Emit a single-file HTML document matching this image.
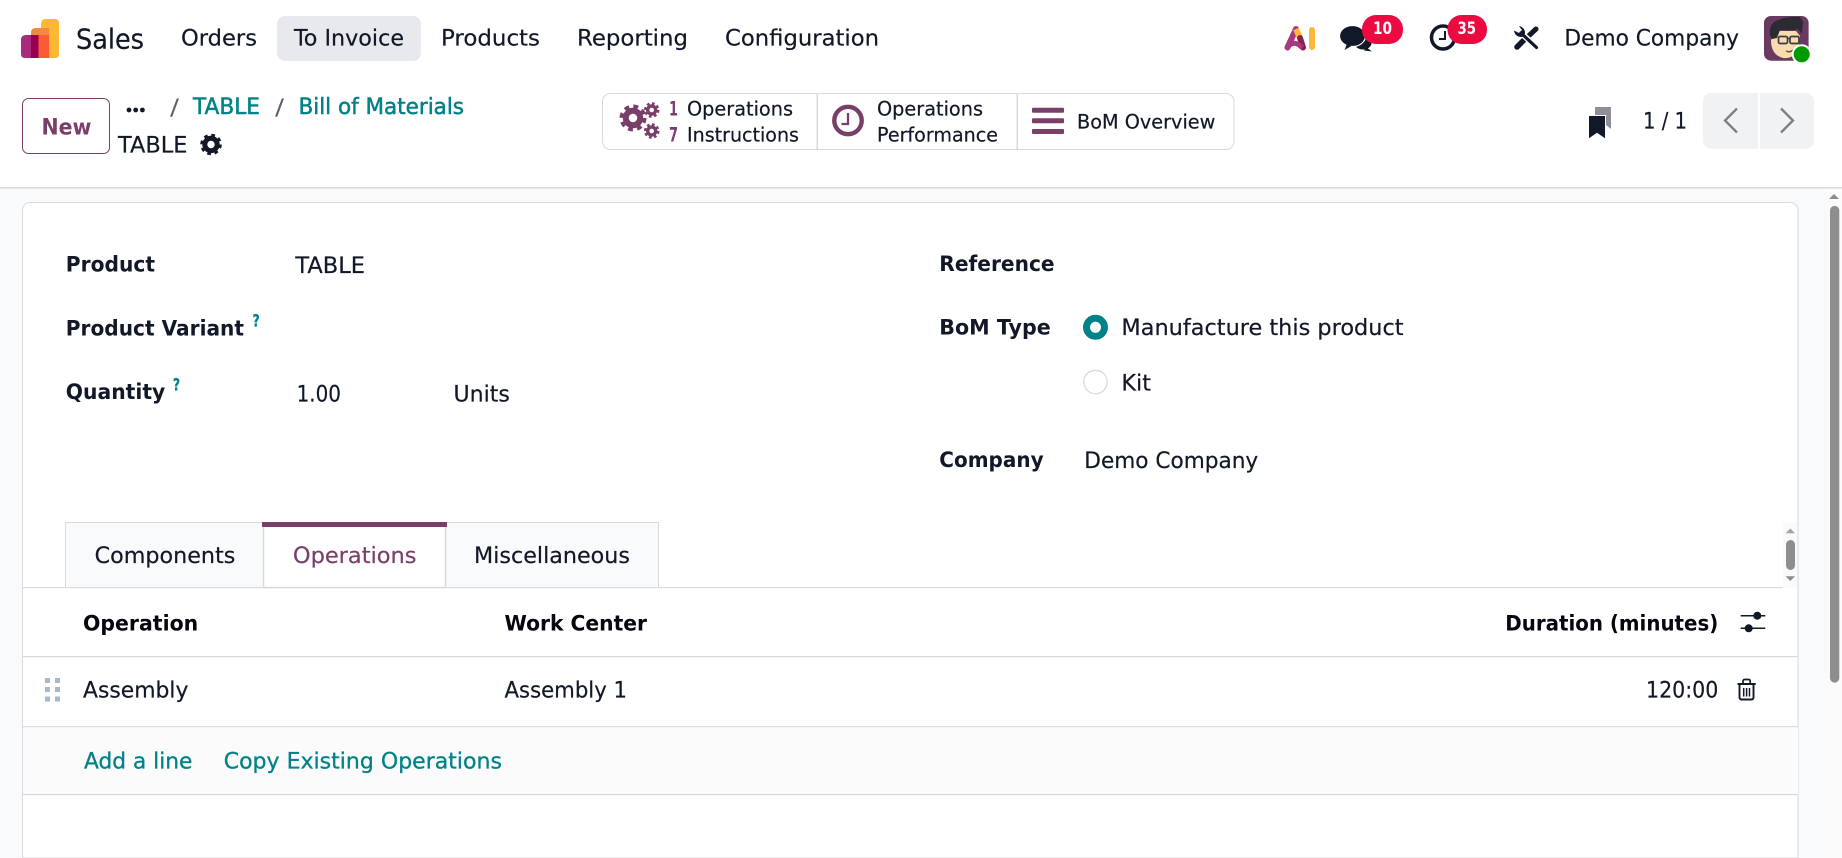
<!DOCTYPE html>
<html lang="en">
<head>
<meta charset="utf-8">
<title>TABLE - Bill of Materials</title>
<style>
html,body{margin:0;padding:0;width:1842px;height:858px;overflow:hidden;background:#f9fafb}
svg{display:block}
text{font-family:"DejaVu Sans","Liberation Sans",sans-serif;fill:#111827;stroke:#111827;stroke-width:.2px;font-size:22.5px;transform:translateY(-.4px)}
.b{font-weight:700;font-size:21.5px;stroke-width:0}
.s{font-size:19.6px}
.t{fill:#018287;stroke:#018287;stroke-width:.3px}
.p{fill:#793f69;stroke:#793f69}
.w{fill:#fff;stroke:none;font-weight:700;font-size:17px}
</style>
</head>
<body>
<svg width="1842" height="858" viewBox="0 0 1842 858" xmlns="http://www.w3.org/2000/svg">
<!-- page -->
<rect width="1842" height="858" fill="#f9fafb"/>
<rect x="1827" y="188" width="15" height="670" fill="#fbfbfb"/>
<rect width="1842" height="187" fill="#fff"/>
<rect y="187" width="1842" height="1.5" fill="#d8dadd"/>

<!-- app logo -->
<path d="M41 24q0-5 5-5h9q4 0 4 4v31q0 4-4 4H41z" fill="#fdb833"/>
<path d="M31 33q0-5 5-5h13v30H31z" fill="#fb5a37"/>
<path d="M31 33q0-5 5-5h13v7H31z" fill="#f08a3c"/>
<path d="M21 40q0-5 5-5h12v23H25q-4 0-4-4z" fill="#a72c7e"/>
<rect x="31" y="35" width="7.5" height="23" fill="#98004f"/>

<text x="76" y="49" style="font-size:28px" textLength="68" lengthAdjust="spacingAndGlyphs">Sales</text>

<!-- menu -->
<rect x="277" y="16" width="144" height="45" rx="8" fill="#e7e9ed"/>
<text x="181" y="46" textLength="76" lengthAdjust="spacingAndGlyphs">Orders</text>
<text x="294" y="46" textLength="110" lengthAdjust="spacingAndGlyphs">To Invoice</text>
<text x="441" y="46" textLength="99" lengthAdjust="spacingAndGlyphs">Products</text>
<text x="577" y="46" textLength="111" lengthAdjust="spacingAndGlyphs">Reporting</text>
<text x="725" y="46" textLength="154" lengthAdjust="spacingAndGlyphs">Configuration</text>

<!-- AI -->
<path d="M1287.500 47.500 L1296 29" stroke="#a8397f" stroke-width="6" stroke-linecap="round" fill="none"/>
<path d="M1296 29 L1300 38" stroke="#fbb93b" stroke-width="6" fill="none"/>
<path d="M1300 38 L1303 47.500" stroke="#8e1f4f" stroke-width="6" stroke-linecap="round" fill="none"/>
<path d="M1287 47.500 Q1294 39 1302 47.500" stroke="#a8397f" stroke-width="5" fill="none"/>
<rect x="1309" y="27" width="6" height="23" rx="3" fill="#fbb93b"/>

<!-- chat -->
<ellipse cx="1363" cy="43" rx="8.5" ry="6.5" fill="#111827"/>
<path d="M1366 47l6 4.500-8-1z" fill="#111827"/>
<ellipse cx="1352.500" cy="36" rx="13" ry="10.500" fill="#111827" stroke="#fff" stroke-width="1.2"/>
<path d="M1347 44l-2.500 6 7-4z" fill="#111827"/>
<rect x="1362" y="15" width="41" height="29" rx="14" fill="#ec0a40"/>
<text class="w" x="1373" y="34.500" textLength="19" lengthAdjust="spacingAndGlyphs">10</text>

<!-- activity -->
<circle cx="1443" cy="37.500" r="11.500" fill="none" stroke="#111827" stroke-width="3.500"/>
<path d="M1445 31v8h-6" fill="none" stroke="#111827" stroke-width="2"/>
<rect x="1447.500" y="15" width="39.500" height="29" rx="14" fill="#ec0a40"/>
<text class="w" x="1457.500" y="34.500" textLength="18.500" lengthAdjust="spacingAndGlyphs">35</text>

<!-- tools -->
<path d="M1536 29 L1528 36.500" stroke="#111827" stroke-width="5" stroke-linecap="round"/>
<path d="M1524 40 L1517 47" stroke="#111827" stroke-width="5.500" stroke-linecap="round"/>
<path d="M1521 33 L1537 47.500" stroke="#fff" stroke-width="6"/>
<path d="M1521 33 L1536.500 47.500" stroke="#111827" stroke-width="3.200" stroke-linecap="round"/>
<path d="M1514 30.500a7 7 0 0 0 9.500 6l1.500-3a7 7 0 0 0-6-7.500l3 4-3 3z" fill="#111827"/>

<text x="1564.400" y="46" textLength="174.600" lengthAdjust="spacingAndGlyphs">Demo Company</text>

<!-- avatar -->
<rect x="1764" y="16" width="44.600" height="44.700" rx="7" fill="#6a3a60"/>
<path d="M1771 40q0 15 12 18 10 1 15-8l2-14-4-5h-18z" fill="#f7dcb0"/>
<path d="M1770 35q-1-11 6-14 10-5 24-4l3 5-1 12-4-5q-7 2-13 1l-5 0-3 8-5 1z" fill="#2c2a33"/>
<rect x="1778.500" y="36.500" width="9" height="7" rx="1.500" fill="none" stroke="#3a3d45" stroke-width="1.700"/>
<rect x="1790" y="36.500" width="9" height="7" rx="1.500" fill="none" stroke="#3a3d45" stroke-width="1.700"/>
<path d="M1787 38.500h3" stroke="#3a3d45" stroke-width="1.500"/>
<path d="M1786 51q4 2 7-1" stroke="#8a4a3a" stroke-width="1.500" fill="none"/>
<circle cx="1801.700" cy="54.300" r="10" fill="#fff"/>
<circle cx="1801.700" cy="54.300" r="8" fill="#009a00"/>

<!-- control panel left -->
<rect x="22.500" y="98.500" width="87" height="55" rx="6" fill="#fff" stroke="#793f69"/>
<text class="p" x="41.500" y="135" style="font-size:22px;font-weight:700;stroke-width:0" textLength="50" lengthAdjust="spacingAndGlyphs">New</text>
<circle cx="129" cy="110" r="2.400" fill="#111827"/><circle cx="135.700" cy="110" r="2.400" fill="#111827"/><circle cx="142.400" cy="110" r="2.400" fill="#111827"/>
<text x="170" y="115.500" style="fill:#5c5f6e;stroke:none" textLength="9" lengthAdjust="spacingAndGlyphs">/</text>
<text class="t" x="193" y="114.300" style="stroke-width:.5px" textLength="67" lengthAdjust="spacingAndGlyphs">TABLE</text>
<text x="275" y="115.500" style="fill:#5c5f6e;stroke:none" textLength="9" lengthAdjust="spacingAndGlyphs">/</text>
<text class="t" x="298.500" y="114.300" style="stroke-width:.5px" textLength="165.500" lengthAdjust="spacingAndGlyphs">Bill of Materials</text>
<text x="118" y="152.700" textLength="69.400" lengthAdjust="spacingAndGlyphs">TABLE</text>
<circle cx="211" cy="144.500" r="6.200" fill="none" stroke="#111827" stroke-width="5"/>
<circle cx="211" cy="144.500" r="9.200" fill="none" stroke="#111827" stroke-width="3.200" stroke-dasharray="3.600 3.630"/>

<!-- smart buttons -->
<rect x="602.500" y="93.500" width="631.500" height="56" rx="8" fill="#fff" stroke="#d8dadd"/>
<rect x="816.500" y="94" width="1.500" height="55" fill="#d8dadd"/>
<rect x="1016.500" y="94" width="1.500" height="55" fill="#d8dadd"/>
<g fill="none" stroke="#793f69">
<circle cx="633" cy="118" r="7.200" stroke-width="6"/>
<circle cx="633" cy="118" r="11" stroke-width="5" stroke-dasharray="4.600 4.040"/>
<circle cx="651.700" cy="110" r="4" stroke-width="3.400"/>
<circle cx="651.700" cy="110" r="6.200" stroke-width="3.200" stroke-dasharray="2.600 2.270"/>
<circle cx="651.700" cy="131" r="4" stroke-width="3.400"/>
<circle cx="651.700" cy="131" r="6.200" stroke-width="3.200" stroke-dasharray="2.600 2.270"/>
</g>
<text class="s p" x="669" y="116" style="font-weight:700;stroke-width:0" textLength="9" lengthAdjust="spacingAndGlyphs">1</text>
<text class="s" x="687" y="116" textLength="106" lengthAdjust="spacingAndGlyphs">Operations</text>
<text class="s p" x="669" y="142" style="font-weight:700;stroke-width:0" textLength="9" lengthAdjust="spacingAndGlyphs">7</text>
<text class="s" x="687" y="142" textLength="112" lengthAdjust="spacingAndGlyphs">Instructions</text>
<circle cx="848" cy="120.500" r="13.700" fill="none" stroke="#793f69" stroke-width="4.400"/>
<path d="M848 113v11h-6.500" fill="none" stroke="#793f69" stroke-width="2.300"/>
<text class="s" x="877" y="116" textLength="106" lengthAdjust="spacingAndGlyphs">Operations</text>
<text class="s" x="877" y="142" textLength="121" lengthAdjust="spacingAndGlyphs">Performance</text>
<rect x="1032" y="107.700" width="32" height="5" rx="1" fill="#793f69"/>
<rect x="1032" y="118.300" width="32" height="5" rx="1" fill="#793f69"/>
<rect x="1032" y="129" width="32" height="5" rx="1" fill="#793f69"/>
<text class="s" x="1077" y="128.700" textLength="138.400" lengthAdjust="spacingAndGlyphs">BoM Overview</text>

<!-- pager -->
<path d="M1595 107h16v22l-5-4V115h-11z" fill="#8f9097"/>
<path d="M1589 116h16v22.300l-8-5.500-8 5.500z" fill="#111827"/>
<text x="1643" y="129" textLength="44" lengthAdjust="spacingAndGlyphs">1 / 1</text>
<path d="M1703 101a8 8 0 0 1 8-8h47v55.700h-47a8 8 0 0 1-8-8z" fill="#f1f2f4"/>
<path d="M1760 93h46a8 8 0 0 1 8 8v39.700a8 8 0 0 1-8 8h-46z" fill="#f1f2f4"/>
<path d="M1737 108.500 L1725 120.500 L1737 132.500" fill="none" stroke="#7d7d82" stroke-width="2.300"/>
<path d="M1781 108.500 L1793 120.500 L1781 132.500" fill="none" stroke="#7d7d82" stroke-width="2.300"/>

<!-- sheet -->
<path d="M22.500 858V210.500a8 8 0 0 1 8-8H1790a8 8 0 0 1 8 8V858z" fill="#fff" stroke="#d8dadd"/>

<text class="b" x="65.800" y="271.700" textLength="89.200" lengthAdjust="spacingAndGlyphs">Product</text>
<text x="295.400" y="273.300" textLength="69.600" lengthAdjust="spacingAndGlyphs">TABLE</text>
<text class="b" x="65.800" y="335.700" textLength="178.200" lengthAdjust="spacingAndGlyphs">Product Variant</text>
<text class="t" x="252.600" y="326.700" style="font-size:17px;font-weight:700" textLength="7" lengthAdjust="spacingAndGlyphs">?</text>
<text class="b" x="65.800" y="399.300" textLength="99.500" lengthAdjust="spacingAndGlyphs">Quantity</text>
<text class="t" x="173" y="390.700" style="font-size:17px;font-weight:700" textLength="7" lengthAdjust="spacingAndGlyphs">?</text>
<text x="296.600" y="402" textLength="44.400" lengthAdjust="spacingAndGlyphs">1.00</text>
<text x="453.500" y="402" textLength="56.300" lengthAdjust="spacingAndGlyphs">Units</text>

<text class="b" x="939.300" y="271.300" textLength="115.300" lengthAdjust="spacingAndGlyphs">Reference</text>
<text class="b" x="939.300" y="335" textLength="111.400" lengthAdjust="spacingAndGlyphs">BoM Type</text>
<circle cx="1095.500" cy="327.300" r="9" fill="#fff" stroke="#018287" stroke-width="7"/>
<text x="1121.400" y="335.300" textLength="282.200" lengthAdjust="spacingAndGlyphs">Manufacture this product</text>
<circle cx="1095.500" cy="382" r="11.700" fill="#fff" stroke="#d8dadd" stroke-width="1.300"/>
<text x="1121.400" y="391" textLength="29.600" lengthAdjust="spacingAndGlyphs">Kit</text>
<text class="b" x="939.300" y="467.300" textLength="104.300" lengthAdjust="spacingAndGlyphs">Company</text>
<text x="1084.300" y="468.300" textLength="173.900" lengthAdjust="spacingAndGlyphs">Demo Company</text>

<!-- tabs -->
<rect x="65.500" y="522.500" width="198" height="65" fill="#f9fafb" stroke="#d8dadd"/>
<rect x="445.500" y="522.500" width="213" height="65" fill="#f9fafb" stroke="#d8dadd"/>
<rect x="263.500" y="523" width="182" height="64.500" fill="#fff" stroke="#d8dadd" stroke-width="1.500"/>
<rect x="262" y="522" width="185" height="5" fill="#793f69"/>
<rect x="22.500" y="587" width="1760.500" height="1.200" fill="#d8dadd"/>
<text x="94.600" y="563.300" textLength="140.700" lengthAdjust="spacingAndGlyphs">Components</text>
<text class="p" x="292.900" y="563.300" textLength="123.600" lengthAdjust="spacingAndGlyphs">Operations</text>
<text x="474" y="563.300" textLength="156" lengthAdjust="spacingAndGlyphs">Miscellaneous</text>

<!-- inner scrollbar -->
<rect x="1783" y="522.500" width="14.500" height="65" fill="#fafafa"/>
<path d="M1790.300 528.500l4.700 4.700h-9.400z" fill="#a3a3a3"/>
<rect x="1786" y="540" width="9" height="30" rx="4.500" fill="#8e8e8e"/>
<path d="M1790.300 581l-4.700-4.700h9.400z" fill="#8a8a8a"/>

<!-- table -->
<text class="b" x="83" y="631" style="fill:#05060f" textLength="115.200" lengthAdjust="spacingAndGlyphs">Operation</text>
<text class="b" x="504.500" y="631" style="fill:#05060f" textLength="142.500" lengthAdjust="spacingAndGlyphs">Work Center</text>
<text class="b" x="1505.300" y="630.700" style="fill:#05060f" textLength="213" lengthAdjust="spacingAndGlyphs">Duration (minutes)</text>
<g fill="#111827">
<rect x="1740.700" y="615" width="24.600" height="1.500"/>
<rect x="1740.700" y="627.500" width="24.600" height="1.500"/>
<circle cx="1757.300" cy="615.700" r="4"/>
<circle cx="1748.700" cy="628.300" r="4"/>
</g>
<rect x="23" y="656" width="1775" height="1.200" fill="#d8dadd"/>

<g fill="#a9b8c8">
<rect x="45" y="678" width="5" height="5"/><rect x="55" y="678" width="5" height="5"/>
<rect x="45" y="687" width="5" height="5"/><rect x="55" y="687" width="5" height="5"/>
<rect x="45" y="696.500" width="5" height="5"/><rect x="55" y="696.500" width="5" height="5"/>
</g>
<text x="83" y="698" textLength="105.400" lengthAdjust="spacingAndGlyphs">Assembly</text>
<text x="504.500" y="698" textLength="122.500" lengthAdjust="spacingAndGlyphs">Assembly 1</text>
<text x="1646" y="698" textLength="72.300" lengthAdjust="spacingAndGlyphs">120:00</text>
<g fill="none" stroke="#111827">
<path d="M1737.500 684h18.200" stroke-width="2"/>
<path d="M1743 684v-3a1.500 1.500 0 0 1 1.500-1.500h4.200a1.500 1.500 0 0 1 1.500 1.500v3" stroke-width="1.700"/>
<path d="M1739.500 684v13.500a2 2 0 0 0 2 2h10a2 2 0 0 0 2-2V684" stroke-width="1.900"/>
<path d="M1743.700 688v8.500M1746.600 688v8.500M1749.500 688v8.500" stroke-width="1.500"/>
</g>
<rect x="23" y="726" width="1775" height="68" fill="#fbfbfb"/>
<rect x="23" y="726" width="1775" height="1.200" fill="#d8dadd"/>
<rect x="23" y="794" width="1775" height="1.200" fill="#d8dadd"/>
<text class="t" x="84" y="768.700" textLength="108.400" lengthAdjust="spacingAndGlyphs">Add a line</text>
<text class="t" x="223.700" y="768.700" textLength="278.300" lengthAdjust="spacingAndGlyphs">Copy Existing Operations</text>

<!-- page scrollbar -->
<path d="M1834 194l5 5h-10z" fill="#8e8e8e"/>
<path d="M1830 210.500a4.600 4.600 0 0 1 9.300 0V678a4.600 4.600 0 0 1-9.300 0z" fill="#8e8e8e"/>
</svg>
</body>
</html>
